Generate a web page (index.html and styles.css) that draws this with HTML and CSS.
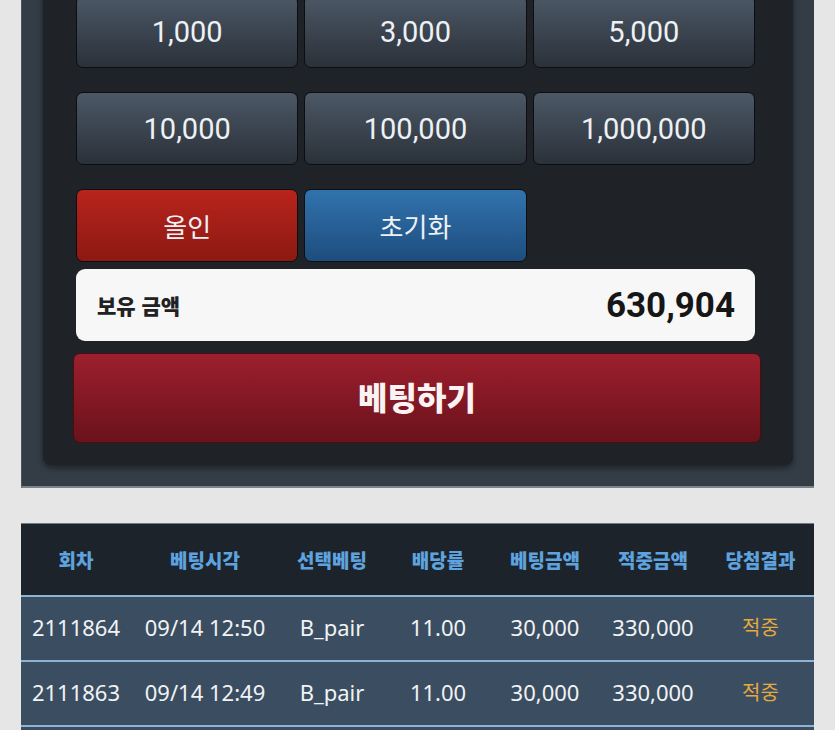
FILE: index.html
```html
<!DOCTYPE html>
<html lang="ko">
<head>
<meta charset="utf-8">
<title>베팅</title>
<link rel="stylesheet" href="styles.css">
</head>
<body>
<div class="page">
  <section class="panel">
    <div class="card">
      <div class="chips">
        <button class="btn gray">1,000</button>
        <button class="btn gray">3,000</button>
        <button class="btn gray">5,000</button>
        <button class="btn gray">10,000</button>
        <button class="btn gray">100,000</button>
        <button class="btn gray">1,000,000</button>
        <button class="btn red kr">올인</button>
        <button class="btn blue kr">초기화</button>
      </div>
      <div class="balance">
        <span class="balance-label">보유 금액</span>
        <span class="balance-value">630,904</span>
      </div>
      <button class="bet">베팅하기</button>
    </div>
  </section>

  <table class="history">
    <colgroup>
      <col class="c1"><col class="c2"><col class="c3"><col class="c4"><col class="c5"><col class="c6"><col class="c7">
    </colgroup>
    <thead>
      <tr>
        <th>회차</th><th>베팅시각</th><th>선택베팅</th><th>배당률</th><th>베팅금액</th><th>적중금액</th><th>당첨결과</th>
      </tr>
    </thead>
    <tbody>
      <tr>
        <td>2111864</td><td>09/14 12:50</td><td>B_pair</td><td>11.00</td><td>30,000</td><td>330,000</td><td class="win">적중</td>
      </tr>
      <tr>
        <td>2111863</td><td>09/14 12:49</td><td>B_pair</td><td>11.00</td><td>30,000</td><td>330,000</td><td class="win">적중</td>
      </tr>
      <tr class="spacer-row">
        <td></td><td></td><td></td><td></td><td></td><td></td><td></td>
      </tr>
    </tbody>
  </table>
</div>
</body>
</html>
```

FILE: styles.css
```css
html, body {
  margin: 0;
  padding: 0;
  background: #e6e6e6;
  overflow: hidden;
}

.page {
  width: 793px;
  margin-left: 21px;
}

.panel {
  margin-top: -47px;
  background: #343d46;
  padding: 22px 21px 21px 21px;
  border-bottom: 2px solid #7a838d;
  border-left: 1px solid #4a545e;
}

.card {
  background: #1f2226;
  border-radius: 8px;
  padding: 20px 32px 22px 30px;
  box-shadow: 0 3px 6px rgba(0, 0, 0, 0.45);
}

.chips {
  display: grid;
  grid-template-columns: repeat(3, 1fr);
  grid-auto-rows: 73px;
  column-gap: 6px;
  row-gap: 24px;
  margin: 0 6px 0 3px;
}

.btn {
  border: 1px solid #0c0e11;
  border-radius: 7px;
  color: #eef1f4;
  font-family: Roboto, "Noto Sans", sans-serif;
  font-size: 29px;
  padding: 0;
  cursor: pointer;
}

.btn.gray {
  background: linear-gradient(#4c5866, #2a3139);
}

.btn.red {
  background: linear-gradient(#b8241c, #8c1913);
}

.btn.blue {
  background: linear-gradient(#3173ad, #1e4d7e);
}

.btn.kr {
  font-family: "Noto Sans CJK KR", sans-serif;
  font-size: 26px;
}

.balance {
  margin: 7px 6px 0 3px;
  height: 72px;
  box-sizing: border-box;
  background: #f7f7f7;
  border-radius: 9px;
  display: flex;
  align-items: center;
  justify-content: space-between;
  padding: 0 20px 0 21px;
}

.balance-label {
  font-family: "Noto Sans CJK KR", sans-serif;
  font-weight: 900;
  font-size: 21px;
  color: #222;
}

.balance-value {
  font-family: Roboto, sans-serif;
  font-weight: 700;
  font-size: 35px;
  color: #161616;
}

.bet {
  display: block;
  width: 100%;
  height: 90px;
  margin-top: 12px;
  border: 1px solid #4d0b12;
  border-radius: 7px;
  background: linear-gradient(#9d1f2d, #6a121b);
  color: #fbf3f3;
  font-family: "Noto Sans CJK KR", sans-serif;
  font-weight: 900;
  font-size: 32px;
  padding: 0 0 4px;
  cursor: pointer;
}

.history {
  margin-top: 35px;
  width: 793px;
  border-collapse: collapse;
  table-layout: fixed;
  border-top: 1px solid #6e7a86;
}

.c1 { width: 110px; }
.c2 { width: 148px; }
.c3 { width: 106px; }
.c4 { width: 106px; }
.c5 { width: 108px; }
.c6 { width: 108px; }
.c7 { width: 107px; }

.history th {
  height: 71px;
  background: #1d232a;
  color: #5ea3df;
  font-family: "Noto Sans CJK KR", sans-serif;
  font-weight: 900;
  font-size: 19px;
  text-align: center;
  padding: 0;
  border-bottom: 2px solid #8fb3d2;
}

.history td {
  height: 59px;
  background: #3b4e61;
  color: #f1f3f5;
  font-family: "Noto Sans", "Noto Sans CJK KR", sans-serif;
  font-size: 22px;
  text-align: center;
  padding: 0 0 4px;
  white-space: nowrap;
  border-bottom: 2px solid #8fb3d2;
}

.history td.win {
  color: #e6a93c;
  font-family: "Noto Sans CJK KR", sans-serif;
  font-size: 20px;
}
```
